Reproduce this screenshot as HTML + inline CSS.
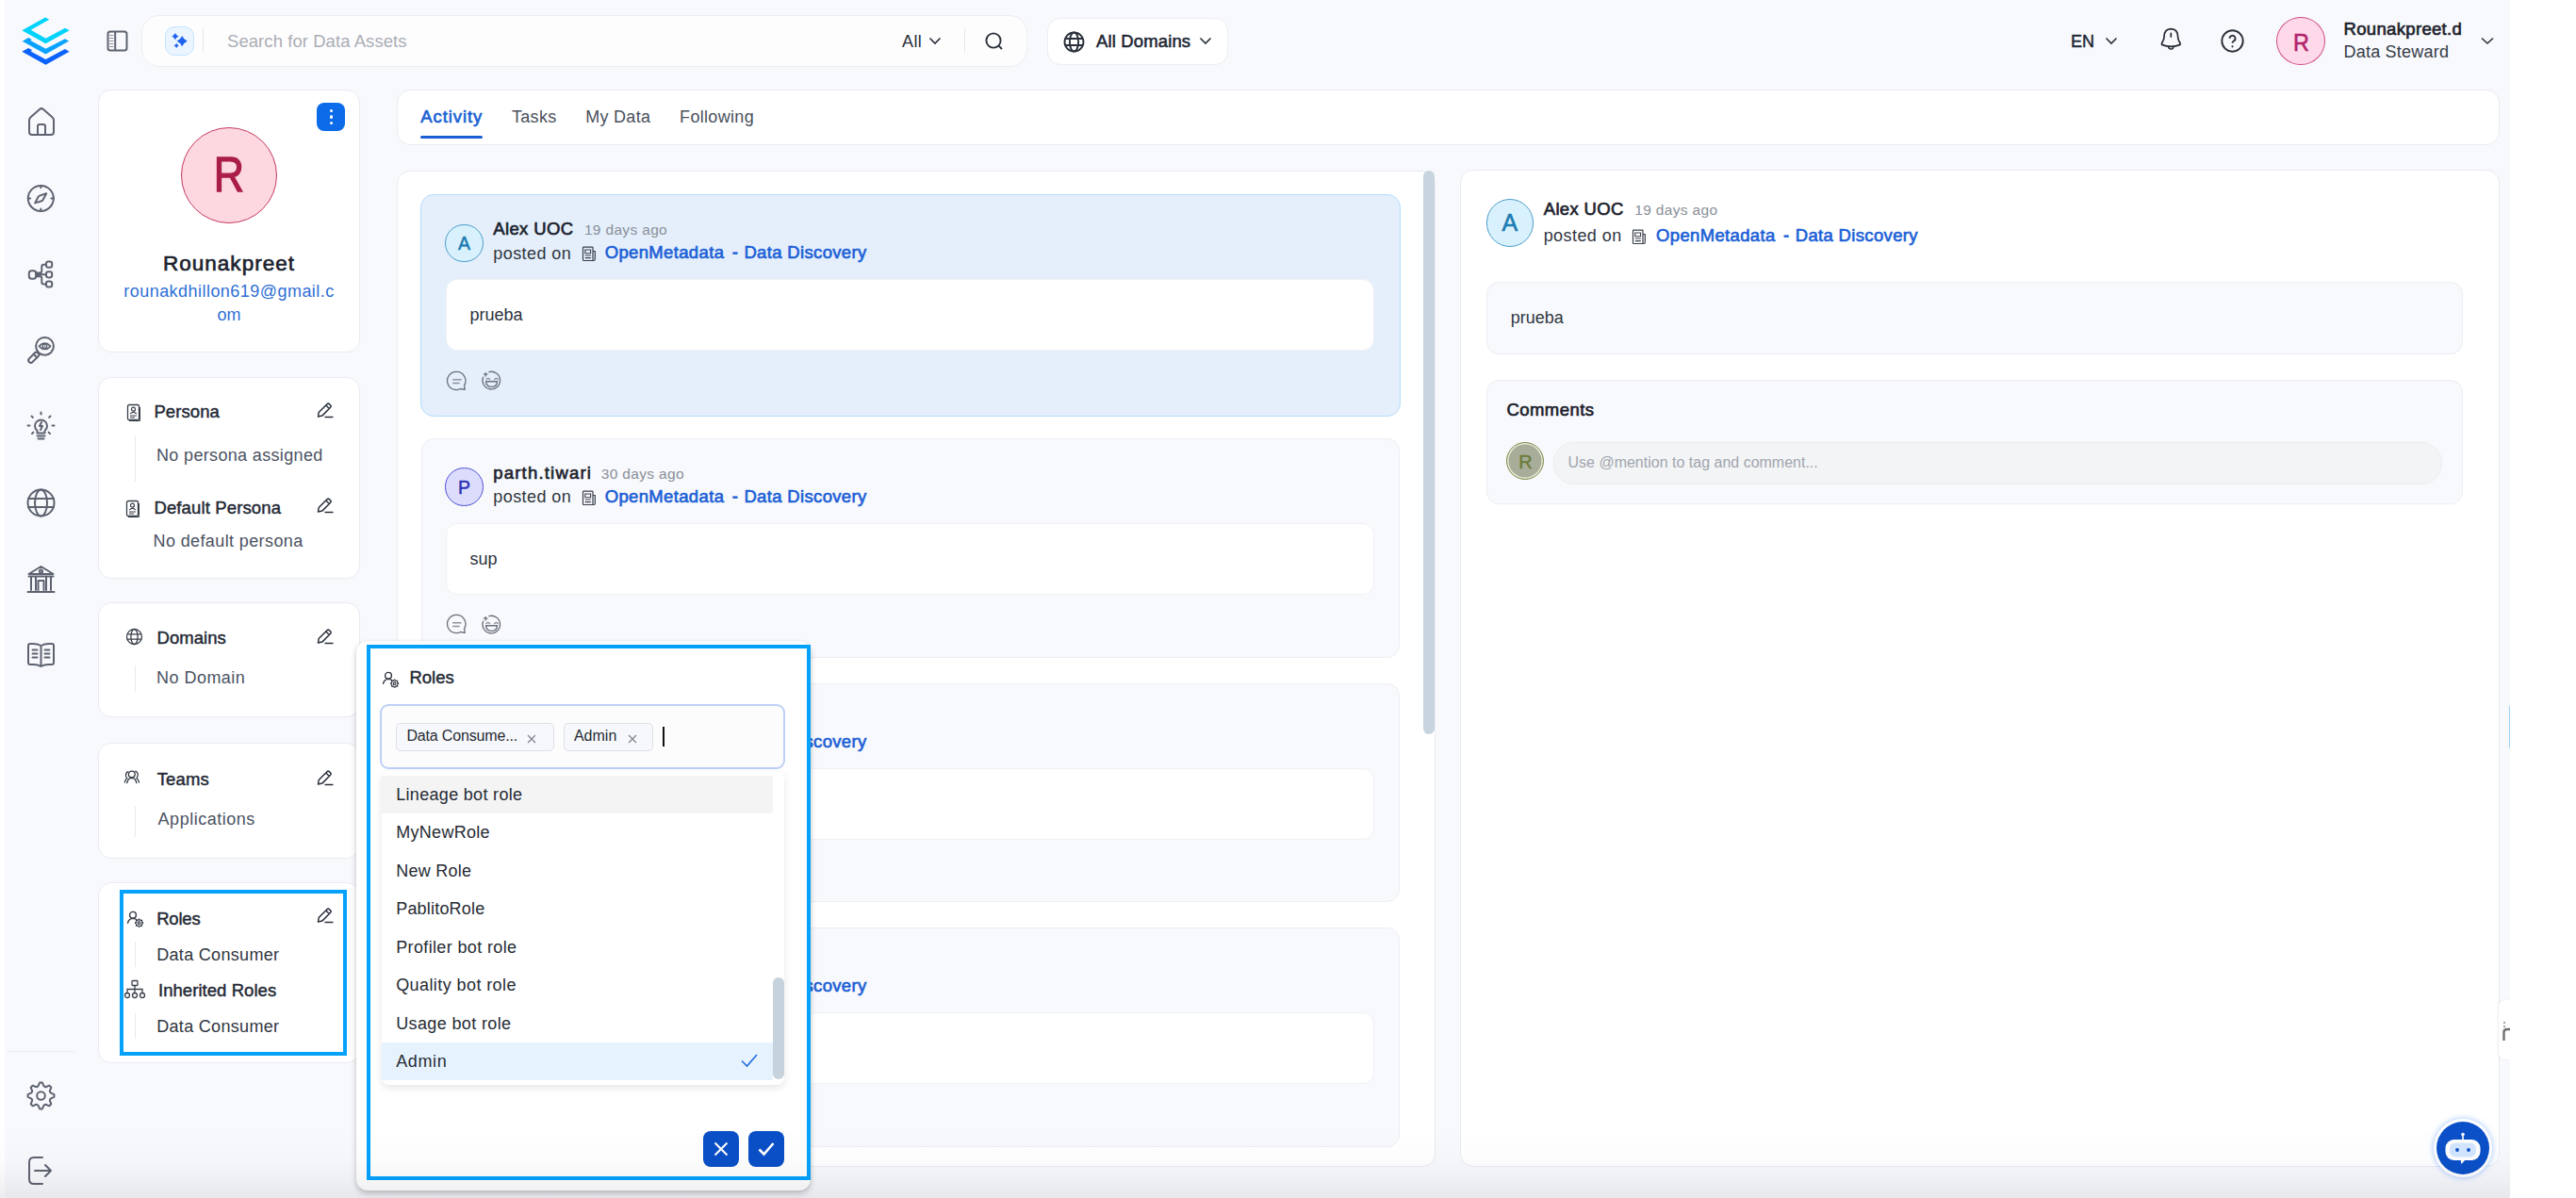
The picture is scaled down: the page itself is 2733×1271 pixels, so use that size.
<!DOCTYPE html>
<html><head><meta charset="utf-8"><title>OpenMetadata</title>
<style>
html,body{margin:0;padding:0}
body{width:2733px;height:1271px;position:relative;overflow:hidden;background:#fff;font-family:"Liberation Sans", sans-serif;}
.t{position:absolute;line-height:0;white-space:nowrap}
svg{overflow:visible}
</style></head><body>
<div style="position:absolute;left:5px;top:0px;width:2658px;height:1271px;box-sizing:border-box;background:#f8f9fc"></div>
<svg style="position:absolute;left:10px;top:10px;" width="220" height="70" viewBox="0 0 2576 820" fill="none"><polygon fill="#00d3fb" points="155,262 445,100 495,125 265,255 450,360 690,232 745,262 450,425"/><polygon fill="#0aa2ff" points="160,395 235,350 275,373 262,388 450,490 690,365 740,392 450,555"/><polygon fill="#0a62ff" points="155,525 235,480 280,505 265,520 450,620 690,493 745,525 450,688"/></svg>
<svg style="position:absolute;left:113px;top:32px;" width="23" height="23" viewBox="0 0 23 23" fill="none"><rect x="1.5" y="1.5" width="20" height="20" rx="2.5" stroke="#5d6370" stroke-width="2"/><line x1="9.2" y1="1.5" x2="9.2" y2="21.5" stroke="#5d6370" stroke-width="2"/><line x1="3.2" y1="5.5" x2="7.4" y2="5.5" stroke="#8a8f99" stroke-width="1"/><line x1="3.2" y1="8.5" x2="7.4" y2="8.5" stroke="#8a8f99" stroke-width="1"/><line x1="3.2" y1="11.5" x2="7.4" y2="11.5" stroke="#8a8f99" stroke-width="1"/><line x1="3.2" y1="14.5" x2="7.4" y2="14.5" stroke="#8a8f99" stroke-width="1"/><line x1="3.2" y1="17.5" x2="7.4" y2="17.5" stroke="#8a8f99" stroke-width="1"/></svg>
<div style="position:absolute;left:150px;top:16px;width:940px;height:55px;box-sizing:border-box;background:#fdfdfe;border:1px solid #eceef3;border-radius:19px"></div>
<div style="position:absolute;left:175px;top:28px;width:31px;height:31px;box-sizing:border-box;background:#ebf5ff;border:1px solid #c3e4ff;border-radius:10px"></div>
<svg style="position:absolute;left:175px;top:28px;" width="31" height="31" viewBox="0 0 31 31" fill="none"><path fill="#1e63f0" d="M18.2 10.1 Q19.768 14.132 23.799999999999997 15.7 Q19.768 17.268 18.2 21.299999999999997 Q16.631999999999998 17.268 12.6 15.7 Q16.631999999999998 14.132 18.2 10.1Z"/><path fill="#1e63f0" d="M10.9 7.0 Q11.908000000000001 9.591999999999999 14.5 10.6 Q11.908000000000001 11.608 10.9 14.2 Q9.892 11.608 7.300000000000001 10.6 Q9.892 9.591999999999999 10.9 7.0Z"/><path fill="#1e63f0" d="M12.2 17.799999999999997 Q12.927999999999999 19.671999999999997 14.799999999999999 20.4 Q12.927999999999999 21.128 12.2 23.0 Q11.472 21.128 9.6 20.4 Q11.472 19.671999999999997 12.2 17.799999999999997Z"/></svg>
<div style="position:absolute;left:215px;top:30px;width:1px;height:26px;box-sizing:border-box;background:#e4e6ea"></div>
<div class="t" style="left:241.00px;top:44.02px;font-size:18.5px;font-weight:400;color:#abaeb4;letter-spacing:0.063px;">Search for Data Assets</div>
<div class="t" style="left:957.00px;top:43.70px;font-size:18px;font-weight:400;color:#2a303b;letter-spacing:0.395px;">All</div>
<svg style="position:absolute;left:984px;top:37px;" width="16" height="12" viewBox="0 0 16 12" fill="none"><path d="M2.5 3.5 L8 9 L13.5 3.5" stroke="#2a303b" stroke-width="1.6" fill="none"/></svg>
<div style="position:absolute;left:1023px;top:30px;width:1px;height:26px;box-sizing:border-box;background:#e4e6ea"></div>
<svg style="position:absolute;left:1044px;top:33px;" width="22" height="22" viewBox="0 0 22 22" fill="none"><circle cx="10" cy="10" r="7.6" stroke="#2a303b" stroke-width="1.9"/><path d="M15.6 15.6 L19 19" stroke="#2a303b" stroke-width="1.9"/></svg>
<div style="position:absolute;left:1111px;top:19px;width:192px;height:50px;box-sizing:border-box;background:#fff;border:1px solid #eceef3;border-radius:14px"></div>
<svg style="position:absolute;left:1127px;top:32px;" width="25" height="25" viewBox="0 0 25 25" fill="none"><circle cx="12.5" cy="12.5" r="10" stroke="#2a303b" stroke-width="1.9"/><ellipse cx="12.5" cy="12.5" rx="4.6" ry="10" stroke="#2a303b" stroke-width="1.9"/><path d="M3 9 H22 M3 16 H22" stroke="#2a303b" stroke-width="1.9"/></svg>
<div class="t" style="left:1163.00px;top:44.02px;font-size:18.5px;font-weight:400;color:#202633;letter-spacing:0.136px;-webkit-text-stroke:0.55px #202633">All Domains</div>
<svg style="position:absolute;left:1271px;top:37px;" width="16" height="12" viewBox="0 0 16 12" fill="none"><path d="M2.5 3.5 L8 9 L13.5 3.5" stroke="#2a303b" stroke-width="1.6" fill="none"/></svg>
<div class="t" style="left:2197.00px;top:44.20px;font-size:18px;font-weight:400;color:#202633;-webkit-text-stroke:0.45px #202633">EN</div>
<svg style="position:absolute;left:2232px;top:37px;" width="16" height="12" viewBox="0 0 16 12" fill="none"><path d="M2.5 3.5 L8 9 L13.5 3.5" stroke="#2a303b" stroke-width="1.6" fill="none"/></svg>
<svg style="position:absolute;left:2290px;top:28px;" width="27" height="27" viewBox="0 0 27 27" fill="none"><path d="M3.6 19.4 Q3.1 18.3 4.1 16.8 Q6 14 6 11 Q6 2.9 13.3 2.6 Q20.6 2.9 20.6 11 Q20.6 14 22.5 16.8 Q23.5 18.3 23 19.4 Q18.3 21.3 13.3 21.3 Q8.3 21.3 3.6 19.4 Z" stroke="#222833" stroke-width="1.7" stroke-linejoin="round"/><path d="M10.6 22 Q11.3 24.3 13.3 24.3 Q15.3 24.3 16 22" stroke="#222833" stroke-width="1.6"/><path d="M13.3 7.4 V11" stroke="#222833" stroke-width="1.7" stroke-linecap="round"/></svg>
<svg style="position:absolute;left:2355px;top:30px;" width="27" height="27" viewBox="0 0 27 27" fill="none"><circle cx="13.5" cy="13.5" r="11.2" stroke="#2a303b" stroke-width="1.9"/><path d="M10.5 10.8 a3 3 0 1 1 4.3 2.7 c-1 .5 -1.3 1 -1.3 2.2" stroke="#2a303b" stroke-width="1.9" fill="none"/><circle cx="13.5" cy="19.3" r="1.1" fill="#2a303b"/></svg>
<div style="position:absolute;left:2415px;top:18px;width:52px;height:51px;box-sizing:border-box;background:#fdd9ea;border:1.3px solid #cf4b86;border-radius:50%"></div>
<div class="t" style="left:2431.61px;top:45.40px;font-size:26px;font-weight:400;color:#b1246b;-webkit-text-stroke:0.6px #b1246b;transform:scaleX(0.9)">R</div>
<div class="t" style="left:2486.50px;top:30.52px;font-size:18.5px;font-weight:400;color:#1c222d;letter-spacing:0.333px;-webkit-text-stroke:0.65px currentColor">Rounakpreet.d</div>
<div class="t" style="left:2486.50px;top:54.70px;font-size:18px;font-weight:400;color:#363c48;letter-spacing:0.220px;">Data Steward</div>
<svg style="position:absolute;left:2630px;top:37px;" width="18" height="12" viewBox="0 0 18 12" fill="none"><path d="M3 3.5 L9 9 L15 3.5" stroke="#2a303b" stroke-width="1.6" fill="none"/></svg>
<svg style="position:absolute;left:28px;top:112px;" width="32" height="34" viewBox="0 0 32 34" fill="none"><path d="M3 15.5 Q3 13.5 4.6 12.2 L14 4 Q16 2.3 18 4 L27.4 12.2 Q29 13.5 29 15.5 V28 Q29 31 26 31 H6 Q3 31 3 28 Z" stroke="#5d6370" stroke-width="2" stroke-linecap="round" stroke-linejoin="round" fill="none"/><path d="M12 31 V22 Q12 20 14 20 H18 Q20 20 20 22 V31" stroke="#5d6370" stroke-width="2" stroke-linecap="round" stroke-linejoin="round" fill="none"/></svg>
<svg style="position:absolute;left:27px;top:194px;" width="33" height="33" viewBox="0 0 33 33" fill="none"><circle cx="16.3" cy="16.4" r="13.5" stroke="#5d6370" stroke-width="2" stroke-linecap="round" stroke-linejoin="round" fill="none" stroke-width="1.9"/><path d="M16.3 3 V5.3 M16.3 27.5 V29.8 M2.8 16.4 H5.1 M27.5 16.4 H29.8" stroke="#5d6370" stroke-width="2" stroke-linecap="round" stroke-linejoin="round" fill="none" stroke-width="1.9"/><path d="M10.2 21.4 L13.6 14.8 Q14.1 13.9 15 13.6 L22.2 11.3 L18.6 18 Q18.1 18.9 17.2 19.2 Z" stroke="#5d6370" stroke-width="2" stroke-linecap="round" stroke-linejoin="round" fill="none" stroke-width="1.8"/></svg>
<svg style="position:absolute;left:28px;top:275px;" width="30" height="32" viewBox="0 0 30 32" fill="none"><rect x="2.8" y="12.3" width="7.4" height="8.4" rx="2.6" stroke="#5d6370" stroke-width="2" stroke-linecap="round" stroke-linejoin="round" fill="none" stroke-width="1.8"/><rect x="21" y="2.6" width="6.2" height="6.2" rx="2.3" stroke="#5d6370" stroke-width="2" stroke-linecap="round" stroke-linejoin="round" fill="none" stroke-width="1.8"/><rect x="21" y="13.2" width="6.2" height="6.2" rx="2.3" stroke="#5d6370" stroke-width="2" stroke-linecap="round" stroke-linejoin="round" fill="none" stroke-width="1.8"/><rect x="21" y="23.4" width="6.2" height="6.2" rx="2.3" stroke="#5d6370" stroke-width="2" stroke-linecap="round" stroke-linejoin="round" fill="none" stroke-width="1.8"/><path d="M10.2 14.4 H14.3 Q16.3 14.4 16.3 12.4 V7.7 Q16.3 5.7 18.3 5.7 H21 M10.2 16.3 H21 M10.2 18.3 H14.3 Q16.3 18.3 16.3 20.3 V24.5 Q16.3 26.5 18.3 26.5 H21" stroke="#5d6370" stroke-width="2" stroke-linecap="round" stroke-linejoin="round" fill="none" stroke-width="1.6"/></svg>
<svg style="position:absolute;left:27px;top:356px;" width="33" height="33" viewBox="0 0 33 33" fill="none"><circle cx="20.5" cy="11.3" r="9.4" stroke="#5d6370" stroke-width="2" stroke-linecap="round" stroke-linejoin="round" fill="none" stroke-width="1.9"/><g transform="rotate(45 8.7 23.3)"><rect x="6.15" y="16.6" width="5.1" height="13.4" rx="2.5" stroke="#5d6370" stroke-width="2" stroke-linecap="round" stroke-linejoin="round" fill="none" stroke-width="1.8"/><path d="M6.15 20.8 H11.25" stroke="#5d6370" stroke-width="2" stroke-linecap="round" stroke-linejoin="round" fill="none" stroke-width="1.6"/></g><path d="M14.4 11.3 Q20.5 4.9 26.6 11.3 Q20.5 17.7 14.4 11.3Z" stroke="#5d6370" stroke-width="1.7" fill="none" stroke-linejoin="round"/><circle cx="20.5" cy="11.3" r="2.2" stroke="#5d6370" stroke-width="1.4" fill="none"/><circle cx="20.5" cy="11.3" r="0.7" fill="#5d6370"/></svg>
<svg style="position:absolute;left:27px;top:435px;" width="33" height="35" viewBox="0 0 33 35" fill="none"><path d="M10 17 a6.5 6.5 0 1 1 13 0 q0 3 -2.5 5 v2.5 h-8 v-2.5 q-2.5 -2 -2.5 -5z" stroke="#5d6370" stroke-width="2" stroke-linecap="round" stroke-linejoin="round" fill="none" stroke-width="1.8"/><path d="M12.5 27.5 h8 M13.5 30.5 h6" stroke="#5d6370" stroke-width="2" stroke-linecap="round" stroke-linejoin="round" fill="none" stroke-width="1.8"/><path d="M17 13 l-2 4 h3 l-2 4" stroke="#5d6370" stroke-width="2" stroke-linecap="round" stroke-linejoin="round" fill="none" stroke-width="1.5"/><path d="M16.5 2.5 v2 M6.5 6.5 l1.4 1.4 M26.5 6.5 l-1.4 1.4 M2.5 16.5 h2 M28.5 16.5 h2 M7 25 l1.4 -1.4 M26 25 l-1.4 -1.4" stroke="#5d6370" stroke-width="2" stroke-linecap="round" stroke-linejoin="round" fill="none" stroke-width="1.8"/></svg>
<svg style="position:absolute;left:27px;top:517px;" width="33" height="33" viewBox="0 0 33 33" fill="none"><circle cx="16.5" cy="16.5" r="14" stroke="#5d6370" stroke-width="2" stroke-linecap="round" stroke-linejoin="round" fill="none"/><ellipse cx="16.5" cy="16.5" rx="6.5" ry="14" stroke="#5d6370" stroke-width="2" stroke-linecap="round" stroke-linejoin="round" fill="none"/><path d="M3 12 H30 M3 21 H30" stroke="#5d6370" stroke-width="2" stroke-linecap="round" stroke-linejoin="round" fill="none"/></svg>
<svg style="position:absolute;left:27px;top:598px;" width="33" height="33" viewBox="0 0 33 33" fill="none"><path d="M3.5 11 L16.5 3 L29.5 11 Z" stroke="#5d6370" stroke-width="2" stroke-linecap="round" stroke-linejoin="round" fill="none"/><circle cx="16.5" cy="8" r="1.6" stroke="#5d6370" stroke-width="2" stroke-linecap="round" stroke-linejoin="round" fill="none" stroke-width="1.5"/><path d="M6 14 V28 M11 14 V28 M22 14 V28 M27 14 V28 M13.5 28 V18 H19.5 V28 M2.5 30 H30.5 M3.5 13.5 H29.5" stroke="#5d6370" stroke-width="2" stroke-linecap="round" stroke-linejoin="round" fill="none"/></svg>
<svg style="position:absolute;left:27px;top:680px;" width="33" height="29" viewBox="0 0 33 29" fill="none"><path d="M16.5 5 Q13 3 8 3 H5 Q3 3 3 5 V23 Q3 25 5 25 H9 Q13 25 16.5 27 Q20 25 24 25 H28 Q30 25 30 23 V5 Q30 3 28 3 H25 Q20 3 16.5 5 Z M16.5 5 V27" stroke="#5d6370" stroke-width="2" stroke-linecap="round" stroke-linejoin="round" fill="none"/><path d="M7.5 9.5 H12.5 M7.5 13.5 H12.5 M7.5 17.5 H12.5 M20.5 9.5 H25.5 M20.5 13.5 H25.5 M20.5 17.5 H25.5" stroke="#5d6370" stroke-width="2" stroke-linecap="round" stroke-linejoin="round" fill="none" stroke-width="1.6"/></svg>
<div style="position:absolute;left:8px;top:1115px;width:71px;height:1px;box-sizing:border-box;background:#e9ebef"></div>
<svg style="position:absolute;left:28px;top:1147px;" width="31" height="31" viewBox="0 0 31 31" fill="none"><path d="M14.13 1.57 L16.87 1.57 L18.55 5.45 L20.45 6.24 L24.38 4.68 L26.32 6.62 L24.76 10.55 L25.55 12.45 L29.43 14.13 L29.43 16.87 L25.55 18.55 L24.76 20.45 L26.32 24.38 L24.38 26.32 L20.45 24.76 L18.55 25.55 L16.87 29.43 L14.13 29.43 L12.45 25.55 L10.55 24.76 L6.62 26.32 L4.68 24.38 L6.24 20.45 L5.45 18.55 L1.57 16.87 L1.57 14.13 L5.45 12.45 L6.24 10.55 L4.68 6.62 L6.62 4.68 L10.55 6.24 L12.45 5.45 Z" stroke="#5d6370" stroke-width="2" stroke-linecap="round" stroke-linejoin="round" fill="none" stroke-width="1.9"/><circle cx="15.5" cy="15.5" r="4.3" stroke="#5d6370" stroke-width="2" stroke-linecap="round" stroke-linejoin="round" fill="none" stroke-width="1.9"/></svg>
<svg style="position:absolute;left:28px;top:1225px;" width="30" height="34" viewBox="0 0 30 34" fill="none"><path d="M17 3 H8 Q3 3 3 8 V26 Q3 31 8 31 H17" stroke="#5d6370" stroke-width="2" stroke-linecap="round" stroke-linejoin="round" fill="none"/><path d="M9 17 H26 M20 11 L26 17 L20 23" stroke="#5d6370" stroke-width="2" stroke-linecap="round" stroke-linejoin="round" fill="none"/></svg>
<div style="position:absolute;left:104.3px;top:95px;width:277.7px;height:279px;box-sizing:border-box;background:#fff;border:1px solid #e9ebf2;border-radius:14px"></div>
<div style="position:absolute;left:336px;top:109px;width:30px;height:30px;box-sizing:border-box;background:#0b6be8;border-radius:8px"></div>
<div style="position:absolute;left:349.5px;top:115.9px;width:3.1999999999999886px;height:3.1999999999999886px;box-sizing:border-box;background:#fff;border-radius:50%"></div>
<div style="position:absolute;left:349.5px;top:122.4px;width:3.1999999999999886px;height:3.1999999999999886px;box-sizing:border-box;background:#fff;border-radius:50%"></div>
<div style="position:absolute;left:349.5px;top:128.9px;width:3.1999999999999886px;height:3.1999999999999886px;box-sizing:border-box;background:#fff;border-radius:50%"></div>
<div style="position:absolute;left:192px;top:135px;width:102px;height:102px;box-sizing:border-box;background:#fdd8e0;border:1.3px solid #c53b62;border-radius:50%"></div>
<div class="t" style="left:224.22px;top:185.30px;font-size:52px;font-weight:400;color:#a91d48;-webkit-text-stroke:1.3px #a91d48;transform:scaleX(0.86)">R</div>
<div class="t" style="left:173.05px;top:280.12px;font-size:22.5px;font-weight:400;color:#1c222d;letter-spacing:1.005px;-webkit-text-stroke:0.65px currentColor">Rounakpreet</div>
<div class="t" style="left:131.30px;top:308.80px;font-size:18px;font-weight:400;color:#2f6fd5;letter-spacing:0.458px;">rounakdhillon619@gmail.c</div>
<div class="t" style="left:230.49px;top:334.20px;font-size:18px;font-weight:400;color:#2f6fd5;">om</div>
<div style="position:absolute;left:104.3px;top:400px;width:277.7px;height:214px;box-sizing:border-box;background:#fff;border:1px solid #e9ebf2;border-radius:14px"></div>
<svg style="position:absolute;left:134px;top:428px;" width="16" height="20" viewBox="0 0 16 20" fill="none"><rect x="1.5" y="1.5" width="12" height="16" rx="1.5" stroke="#3a404b" stroke-width="1.3"/><path d="M3 18.5 H14.5 V4" stroke="#3a404b" stroke-width="1"/><circle cx="7.5" cy="6.2" r="2" stroke="#3a404b" stroke-width="1.2"/><path d="M4.2 11 Q7.5 7.8 10.8 11" stroke="#3a404b" stroke-width="1.2"/><path d="M4 13 H11 M4 15 H9" stroke="#3a404b" stroke-width="1.2"/></svg>
<div class="t" style="left:163.40px;top:437.02px;font-size:18.5px;font-weight:400;color:#232934;letter-spacing:0.085px;-webkit-text-stroke:0.45px currentColor">Persona</div>
<svg style="position:absolute;left:335px;top:426px;" width="20" height="19" viewBox="0 0 20 19" fill="none"><path d="M2.5 16 L3.2 11.5 L12 2.7 Q13.2 1.5 14.4 2.7 L15.6 3.9 Q16.8 5.1 15.6 6.3 L6.8 15.1 Z M10.8 4 L14.3 7.5" stroke="#2a303b" stroke-width="1.5" stroke-linejoin="round" fill="none"/><path d="M9.5 16.5 H18.5" stroke="#2a303b" stroke-width="1.5"/></svg>
<div style="position:absolute;left:143px;top:462px;width:1px;height:49px;box-sizing:border-box;background:#e8eaee"></div>
<div class="t" style="left:166.00px;top:482.70px;font-size:18px;font-weight:400;color:#4b5262;letter-spacing:0.341px;">No persona assigned</div>
<svg style="position:absolute;left:133px;top:530px;" width="16" height="20" viewBox="0 0 16 20" fill="none"><rect x="1.5" y="1.5" width="12" height="16" rx="1.5" stroke="#3a404b" stroke-width="1.3"/><path d="M3 18.5 H14.5 V4" stroke="#3a404b" stroke-width="1"/><circle cx="7.5" cy="6.2" r="2" stroke="#3a404b" stroke-width="1.2"/><path d="M4.2 11 Q7.5 7.8 10.8 11" stroke="#3a404b" stroke-width="1.2"/><path d="M4 13 H11 M4 15 H9" stroke="#3a404b" stroke-width="1.2"/></svg>
<div class="t" style="left:163.40px;top:538.52px;font-size:18.5px;font-weight:400;color:#232934;letter-spacing:0.135px;-webkit-text-stroke:0.45px currentColor">Default Persona</div>
<svg style="position:absolute;left:335px;top:527px;" width="20" height="19" viewBox="0 0 20 19" fill="none"><path d="M2.5 16 L3.2 11.5 L12 2.7 Q13.2 1.5 14.4 2.7 L15.6 3.9 Q16.8 5.1 15.6 6.3 L6.8 15.1 Z M10.8 4 L14.3 7.5" stroke="#2a303b" stroke-width="1.5" stroke-linejoin="round" fill="none"/><path d="M9.5 16.5 H18.5" stroke="#2a303b" stroke-width="1.5"/></svg>
<div class="t" style="left:162.50px;top:573.70px;font-size:18px;font-weight:400;color:#4b5262;letter-spacing:0.388px;">No default persona</div>
<div style="position:absolute;left:104.3px;top:639px;width:277.7px;height:122px;box-sizing:border-box;background:#fff;border:1px solid #e9ebf2;border-radius:14px"></div>
<svg style="position:absolute;left:133px;top:666px;" width="19" height="19" viewBox="0 0 19 19" fill="none"><circle cx="9.5" cy="9.5" r="8" stroke="#3a404b" stroke-width="1.3"/><ellipse cx="9.5" cy="9.5" rx="3.6" ry="8" stroke="#3a404b" stroke-width="1.3"/><path d="M1.8 6.8 H17.2 M1.8 12.2 H17.2" stroke="#3a404b" stroke-width="1.3"/></svg>
<div class="t" style="left:166.60px;top:676.52px;font-size:18.5px;font-weight:400;color:#232934;letter-spacing:0.029px;-webkit-text-stroke:0.45px currentColor">Domains</div>
<svg style="position:absolute;left:335px;top:666px;" width="20" height="19" viewBox="0 0 20 19" fill="none"><path d="M2.5 16 L3.2 11.5 L12 2.7 Q13.2 1.5 14.4 2.7 L15.6 3.9 Q16.8 5.1 15.6 6.3 L6.8 15.1 Z M10.8 4 L14.3 7.5" stroke="#2a303b" stroke-width="1.5" stroke-linejoin="round" fill="none"/><path d="M9.5 16.5 H18.5" stroke="#2a303b" stroke-width="1.5"/></svg>
<div style="position:absolute;left:143px;top:706px;width:1px;height:28px;box-sizing:border-box;background:#e8eaee"></div>
<div class="t" style="left:166.10px;top:718.70px;font-size:18px;font-weight:400;color:#4b5262;letter-spacing:0.461px;">No Domain</div>
<div style="position:absolute;left:104.3px;top:788px;width:277.7px;height:123px;box-sizing:border-box;background:#fff;border:1px solid #e9ebf2;border-radius:14px"></div>
<svg style="position:absolute;left:131px;top:816px;" width="18" height="16" viewBox="0 0 18 16" fill="none"><circle cx="8.8" cy="5.5" r="3.4" stroke="#2f3540" stroke-width="1.3"/><path d="M3.8 14.6 Q4.6 9.4 8.8 9.3 Q13 9.4 13.8 14.6" stroke="#2f3540" stroke-width="1.3" stroke-linecap="round"/><path d="M5 2.6 Q2.4 3.6 2.5 6.6 Q2.6 8.6 3.8 9.6 Q1.9 10.9 1.3 14.2" stroke="#2f3540" stroke-width="1.2" stroke-linecap="round"/><path d="M12.6 2 Q15.4 3.2 15.3 6.3 Q15.2 8.4 13.9 9.5 Q15.9 10.8 16.6 14.2" stroke="#2f3540" stroke-width="1.2" stroke-linecap="round"/></svg>
<div class="t" style="left:166.70px;top:826.52px;font-size:18.5px;font-weight:400;color:#232934;letter-spacing:0.160px;-webkit-text-stroke:0.45px currentColor">Teams</div>
<svg style="position:absolute;left:335px;top:816px;" width="20" height="19" viewBox="0 0 20 19" fill="none"><path d="M2.5 16 L3.2 11.5 L12 2.7 Q13.2 1.5 14.4 2.7 L15.6 3.9 Q16.8 5.1 15.6 6.3 L6.8 15.1 Z M10.8 4 L14.3 7.5" stroke="#2a303b" stroke-width="1.5" stroke-linejoin="round" fill="none"/><path d="M9.5 16.5 H18.5" stroke="#2a303b" stroke-width="1.5"/></svg>
<div style="position:absolute;left:143px;top:855px;width:1px;height:33px;box-sizing:border-box;background:#e8eaee"></div>
<div class="t" style="left:167.60px;top:868.70px;font-size:18px;font-weight:400;color:#4b5262;letter-spacing:0.511px;">Applications</div>
<div style="position:absolute;left:104.3px;top:936px;width:277.7px;height:192px;box-sizing:border-box;background:#fff;border:1px solid #e9ebf2;border-radius:14px"></div>
<svg style="position:absolute;left:132px;top:963px;" width="22" height="22" viewBox="0 0 22 22" fill="none"><circle cx="9" cy="7.8" r="3.4" stroke="#2f3540" stroke-width="1.4"/><path d="M3.6 16.2 Q4.6 11.6 9 11.4 Q11.6 11.4 12.8 12.8" stroke="#2f3540" stroke-width="1.4" stroke-linecap="round"/><path d="M15.20 12.12 L16.00 12.12 L16.50 13.23 L17.06 13.47 L18.20 13.03 L18.77 13.60 L18.33 14.74 L18.57 15.30 L19.68 15.80 L19.68 16.60 L18.57 17.10 L18.33 17.66 L18.77 18.80 L18.20 19.37 L17.06 18.93 L16.50 19.17 L16.00 20.28 L15.20 20.28 L14.70 19.17 L14.14 18.93 L13.00 19.37 L12.43 18.80 L12.87 17.66 L12.63 17.10 L11.52 16.60 L11.52 15.80 L12.63 15.30 L12.87 14.74 L12.43 13.60 L13.00 13.03 L14.14 13.47 L14.70 13.23 Z" stroke="#2f3540" stroke-width="1.1" stroke-linejoin="round" fill="#fff"/><circle cx="15.6" cy="16.2" r="1.3" stroke="#2f3540" stroke-width="1.1"/></svg>
<div class="t" style="left:166.20px;top:974.52px;font-size:18.5px;font-weight:400;color:#232934;letter-spacing:-0.202px;-webkit-text-stroke:0.45px currentColor">Roles</div>
<svg style="position:absolute;left:335px;top:962px;" width="20" height="19" viewBox="0 0 20 19" fill="none"><path d="M2.5 16 L3.2 11.5 L12 2.7 Q13.2 1.5 14.4 2.7 L15.6 3.9 Q16.8 5.1 15.6 6.3 L6.8 15.1 Z M10.8 4 L14.3 7.5" stroke="#2a303b" stroke-width="1.5" stroke-linejoin="round" fill="none"/><path d="M9.5 16.5 H18.5" stroke="#2a303b" stroke-width="1.5"/></svg>
<div style="position:absolute;left:143px;top:999px;width:1px;height:27px;box-sizing:border-box;background:#e8eaee"></div>
<div class="t" style="left:166.20px;top:1012.70px;font-size:18px;font-weight:400;color:#2f3541;letter-spacing:0.318px;">Data Consumer</div>
<svg style="position:absolute;left:131px;top:1039px;" width="24" height="22" viewBox="0 0 24 22" fill="none"><rect x="9" y="1.5" width="6" height="5" rx="0.8" stroke="#3a404b" stroke-width="1.3"/><path d="M12 6.5 V10.5 M4 14.5 V10.5 H20 V14.5 M12 10.5 V14.5" stroke="#3a404b" stroke-width="1.3"/><circle cx="4" cy="17" r="2.5" stroke="#3a404b" stroke-width="1.3"/><circle cx="12" cy="17" r="2.5" stroke="#3a404b" stroke-width="1.3"/><circle cx="20" cy="17" r="2.5" stroke="#3a404b" stroke-width="1.3"/></svg>
<div class="t" style="left:168.00px;top:1050.53px;font-size:18.5px;font-weight:400;color:#232934;letter-spacing:0.051px;-webkit-text-stroke:0.45px currentColor">Inherited Roles</div>
<div style="position:absolute;left:143px;top:1075px;width:1px;height:27px;box-sizing:border-box;background:#e8eaee"></div>
<div class="t" style="left:166.20px;top:1088.70px;font-size:18px;font-weight:400;color:#2f3541;letter-spacing:0.318px;">Data Consumer</div>
<div style="position:absolute;left:127px;top:943.5px;width:241px;height:176.5px;box-sizing:border-box;border:4px solid #05a2fc"></div>
<div style="position:absolute;left:421px;top:95px;width:2231px;height:59px;box-sizing:border-box;background:#fff;border:1px solid #e9ebf2;border-radius:14px"></div>
<div class="t" style="left:446.30px;top:123.83px;font-size:18.5px;font-weight:400;color:#1b5fd4;letter-spacing:0.913px;-webkit-text-stroke:0.65px currentColor">Activity</div>
<div style="position:absolute;left:446px;top:143.5px;width:66px;height:3.3000000000000114px;box-sizing:border-box;background:#1b5fd4;border-radius:2px"></div>
<div class="t" style="left:542.90px;top:124.00px;font-size:18px;font-weight:400;color:#4a505c;letter-spacing:0.357px;">Tasks</div>
<div class="t" style="left:621.30px;top:124.00px;font-size:18px;font-weight:400;color:#4a505c;letter-spacing:0.267px;">My Data</div>
<div class="t" style="left:721.10px;top:124.00px;font-size:18px;font-weight:400;color:#4a505c;letter-spacing:0.317px;">Following</div>
<div style="position:absolute;left:421px;top:180.5px;width:1102px;height:1057.5px;box-sizing:border-box;background:#fff;border:1px solid #e9ebf2;border-radius:14px"></div>
<div style="position:absolute;left:1509.7px;top:180.5px;width:12.799999999999955px;height:598.5px;box-sizing:border-box;background:#c8d5de;border-radius:7px"></div>
<div style="position:absolute;left:446px;top:206.0px;width:1040px;height:235.5px;box-sizing:border-box;background:#e4effb;border:1.6px solid #b3dcfc;border-radius:14px"></div>
<div style="position:absolute;left:472.2px;top:237.7px;width:40.599999999999966px;height:40.60000000000002px;box-sizing:border-box;background:#d9f1fc;border:1.2px solid #4c9dcb;border-radius:50%"></div>
<div class="t" style="left:485.99px;top:257.98px;font-size:19.5px;font-weight:400;color:#1b7bb3;-webkit-text-stroke:0.5px #1b7bb3">A</div>
<div class="t" style="left:523.30px;top:243.33px;font-size:18.5px;font-weight:400;color:#1c222d;letter-spacing:0.356px;-webkit-text-stroke:0.65px currentColor">Alex UOC</div>
<div class="t" style="left:619.90px;top:244.38px;font-size:15.5px;font-weight:400;color:#8a8f98;letter-spacing:0.339px;">19 days ago</div>
<div class="t" style="left:523.30px;top:268.70px;font-size:18px;font-weight:400;color:#30363f;letter-spacing:0.425px;">posted on</div>
<svg style="position:absolute;left:617px;top:261.0px;" width="16" height="17" viewBox="0 0 16 17" fill="none"><path d="M1.5 2 Q1.5 1.2 2.3 1.2 H11.2 Q12 1.2 12 2 V15.5 H2.3 Q1.5 15.5 1.5 14.7 Z" stroke="#3a404b" stroke-width="1.2"/><path d="M12 5.5 H14.3 V14.3 Q14.3 15.5 13.1 15.5 H12" stroke="#3a404b" stroke-width="1.2"/><path d="M3.8 4 H9.6 V7.8 H3.8 Z" stroke="#3a404b" stroke-width="1.1"/><path d="M3.8 10 H9.8 M3.8 12.6 H9.8" stroke="#3a404b" stroke-width="1.1"/></svg>
<div class="t" style="left:641.70px;top:268.02px;font-size:18.5px;font-weight:400;color:#1c5fd6;letter-spacing:0.349px;-webkit-text-stroke:0.65px currentColor">OpenMetadata</div>
<div class="t" style="left:776.80px;top:268.02px;font-size:18.5px;font-weight:400;color:#1c5fd6;-webkit-text-stroke:0.65px currentColor">-</div>
<div class="t" style="left:789.40px;top:268.02px;font-size:18.5px;font-weight:400;color:#1c5fd6;letter-spacing:0.340px;-webkit-text-stroke:0.65px currentColor">Data Discovery</div>
<div style="position:absolute;left:472.7px;top:296.0px;width:985.8px;height:76.0px;box-sizing:border-box;background:#fff;border:1px solid #f0f1f4;border-radius:12px"></div>
<div class="t" style="left:498.50px;top:334.40px;font-size:18px;font-weight:400;color:#2b313b;">prueba</div>
<svg style="position:absolute;left:473px;top:392.5px;" width="22" height="22" viewBox="0 0 22 22" fill="none"><path d="M11 1.4 A9.6 9.6 0 1 0 15.6 19.5 L20.2 20.4 L19.6 15.9 A9.6 9.6 0 0 0 11 1.4Z" stroke="#6a707b" stroke-width="1.3" stroke-linejoin="round"/><path d="M7.2 9.8 H16.6 M7.2 13.5 H14.6" stroke="#8f949e" stroke-width="1.5"/></svg>
<svg style="position:absolute;left:510px;top:392.0px;" width="23" height="23" viewBox="0 0 23 23" fill="none"><path d="M8.8 2.6 A9.3 9.3 0 1 1 2.6 8.2" stroke="#6a707b" stroke-width="1.3" stroke-linecap="round"/><path d="M5.6 12.7 H17.5 Q17.2 18.4 11.55 18.4 Q5.9 18.4 5.6 12.7Z" stroke="#6a707b" stroke-width="1.4" stroke-linejoin="round"/><path d="M5.9 10.6 Q7.8 8.4 9.7 10.6 M14.6 10.6 Q16.5 8.4 18.4 10.6" stroke="#8f949e" stroke-width="1.4" stroke-linecap="round"/><path d="M5.25 2.9 V7.5 M2.95 5.2 H7.55" stroke="#6a707b" stroke-width="1.3"/></svg>
<div style="position:absolute;left:446.5px;top:465.2px;width:1038.5px;height:233.3px;box-sizing:border-box;background:#f8f9fc;border:1px solid #eceef3;border-radius:13px"></div>
<div style="position:absolute;left:472.2px;top:496.40000000000003px;width:40.599999999999966px;height:40.599999999999966px;box-sizing:border-box;background:#dcdcfd;border:1.2px solid #4d50d8;border-radius:50%"></div>
<div class="t" style="left:485.99px;top:516.67px;font-size:19.5px;font-weight:400;color:#2e32b3;-webkit-text-stroke:0.5px #2e32b3">P</div>
<div class="t" style="left:523.30px;top:502.02px;font-size:18.5px;font-weight:400;color:#1c222d;letter-spacing:1.193px;-webkit-text-stroke:0.65px currentColor">parth.tiwari</div>
<div class="t" style="left:637.80px;top:503.07px;font-size:15.5px;font-weight:400;color:#8a8f98;letter-spacing:0.339px;">30 days ago</div>
<div class="t" style="left:523.30px;top:527.40px;font-size:18px;font-weight:400;color:#30363f;letter-spacing:0.425px;">posted on</div>
<svg style="position:absolute;left:617px;top:519.7px;" width="16" height="17" viewBox="0 0 16 17" fill="none"><path d="M1.5 2 Q1.5 1.2 2.3 1.2 H11.2 Q12 1.2 12 2 V15.5 H2.3 Q1.5 15.5 1.5 14.7 Z" stroke="#3a404b" stroke-width="1.2"/><path d="M12 5.5 H14.3 V14.3 Q14.3 15.5 13.1 15.5 H12" stroke="#3a404b" stroke-width="1.2"/><path d="M3.8 4 H9.6 V7.8 H3.8 Z" stroke="#3a404b" stroke-width="1.1"/><path d="M3.8 10 H9.8 M3.8 12.6 H9.8" stroke="#3a404b" stroke-width="1.1"/></svg>
<div class="t" style="left:641.70px;top:526.73px;font-size:18.5px;font-weight:400;color:#1c5fd6;letter-spacing:0.349px;-webkit-text-stroke:0.65px currentColor">OpenMetadata</div>
<div class="t" style="left:776.80px;top:526.73px;font-size:18.5px;font-weight:400;color:#1c5fd6;-webkit-text-stroke:0.65px currentColor">-</div>
<div class="t" style="left:789.40px;top:526.73px;font-size:18.5px;font-weight:400;color:#1c5fd6;letter-spacing:0.340px;-webkit-text-stroke:0.65px currentColor">Data Discovery</div>
<div style="position:absolute;left:472.7px;top:554.7px;width:985.8px;height:76.0px;box-sizing:border-box;background:#fff;border:1px solid #f0f1f4;border-radius:12px"></div>
<div class="t" style="left:498.50px;top:593.10px;font-size:18px;font-weight:400;color:#2b313b;">sup</div>
<svg style="position:absolute;left:473px;top:651.2px;" width="22" height="22" viewBox="0 0 22 22" fill="none"><path d="M11 1.4 A9.6 9.6 0 1 0 15.6 19.5 L20.2 20.4 L19.6 15.9 A9.6 9.6 0 0 0 11 1.4Z" stroke="#6a707b" stroke-width="1.3" stroke-linejoin="round"/><path d="M7.2 9.8 H16.6 M7.2 13.5 H14.6" stroke="#8f949e" stroke-width="1.5"/></svg>
<svg style="position:absolute;left:510px;top:650.7px;" width="23" height="23" viewBox="0 0 23 23" fill="none"><path d="M8.8 2.6 A9.3 9.3 0 1 1 2.6 8.2" stroke="#6a707b" stroke-width="1.3" stroke-linecap="round"/><path d="M5.6 12.7 H17.5 Q17.2 18.4 11.55 18.4 Q5.9 18.4 5.6 12.7Z" stroke="#6a707b" stroke-width="1.4" stroke-linejoin="round"/><path d="M5.9 10.6 Q7.8 8.4 9.7 10.6 M14.6 10.6 Q16.5 8.4 18.4 10.6" stroke="#8f949e" stroke-width="1.4" stroke-linecap="round"/><path d="M5.25 2.9 V7.5 M2.95 5.2 H7.55" stroke="#6a707b" stroke-width="1.3"/></svg>
<div style="position:absolute;left:446.5px;top:725.4px;width:1038.5px;height:232.10000000000002px;box-sizing:border-box;background:#f8f9fc;border:1px solid #eceef3;border-radius:13px"></div>
<div style="position:absolute;left:472.2px;top:756.6px;width:40.599999999999966px;height:40.59999999999991px;box-sizing:border-box;background:#d9f1fc;border:1.2px solid #4c9dcb;border-radius:50%"></div>
<div class="t" style="left:485.99px;top:776.87px;font-size:19.5px;font-weight:400;color:#1b7bb3;-webkit-text-stroke:0.5px #1b7bb3">A</div>
<div class="t" style="left:523.30px;top:762.22px;font-size:18.5px;font-weight:400;color:#1c222d;letter-spacing:0.356px;-webkit-text-stroke:0.65px currentColor">Alex UOC</div>
<div class="t" style="left:619.90px;top:763.27px;font-size:15.5px;font-weight:400;color:#8a8f98;letter-spacing:0.339px;">19 days ago</div>
<div class="t" style="left:523.30px;top:787.60px;font-size:18px;font-weight:400;color:#30363f;letter-spacing:0.425px;">posted on</div>
<svg style="position:absolute;left:617px;top:779.9px;" width="16" height="17" viewBox="0 0 16 17" fill="none"><path d="M1.5 2 Q1.5 1.2 2.3 1.2 H11.2 Q12 1.2 12 2 V15.5 H2.3 Q1.5 15.5 1.5 14.7 Z" stroke="#3a404b" stroke-width="1.2"/><path d="M12 5.5 H14.3 V14.3 Q14.3 15.5 13.1 15.5 H12" stroke="#3a404b" stroke-width="1.2"/><path d="M3.8 4 H9.6 V7.8 H3.8 Z" stroke="#3a404b" stroke-width="1.1"/><path d="M3.8 10 H9.8 M3.8 12.6 H9.8" stroke="#3a404b" stroke-width="1.1"/></svg>
<div class="t" style="left:641.70px;top:786.92px;font-size:18.5px;font-weight:400;color:#1c5fd6;letter-spacing:0.349px;-webkit-text-stroke:0.65px currentColor">OpenMetadata</div>
<div class="t" style="left:776.80px;top:786.92px;font-size:18.5px;font-weight:400;color:#1c5fd6;-webkit-text-stroke:0.65px currentColor">-</div>
<div class="t" style="left:789.40px;top:786.92px;font-size:18.5px;font-weight:400;color:#1c5fd6;letter-spacing:0.340px;-webkit-text-stroke:0.65px currentColor">Data Discovery</div>
<div style="position:absolute;left:472.7px;top:814.9px;width:985.8px;height:76.0px;box-sizing:border-box;background:#fff;border:1px solid #f0f1f4;border-radius:12px"></div>
<div class="t" style="left:498.50px;top:853.30px;font-size:18px;font-weight:400;color:#2b313b;">prueba</div>
<svg style="position:absolute;left:473px;top:911.4px;" width="22" height="22" viewBox="0 0 22 22" fill="none"><path d="M11 1.4 A9.6 9.6 0 1 0 15.6 19.5 L20.2 20.4 L19.6 15.9 A9.6 9.6 0 0 0 11 1.4Z" stroke="#6a707b" stroke-width="1.3" stroke-linejoin="round"/><path d="M7.2 9.8 H16.6 M7.2 13.5 H14.6" stroke="#8f949e" stroke-width="1.5"/></svg>
<svg style="position:absolute;left:510px;top:910.9px;" width="23" height="23" viewBox="0 0 23 23" fill="none"><path d="M8.8 2.6 A9.3 9.3 0 1 1 2.6 8.2" stroke="#6a707b" stroke-width="1.3" stroke-linecap="round"/><path d="M5.6 12.7 H17.5 Q17.2 18.4 11.55 18.4 Q5.9 18.4 5.6 12.7Z" stroke="#6a707b" stroke-width="1.4" stroke-linejoin="round"/><path d="M5.9 10.6 Q7.8 8.4 9.7 10.6 M14.6 10.6 Q16.5 8.4 18.4 10.6" stroke="#8f949e" stroke-width="1.4" stroke-linecap="round"/><path d="M5.25 2.9 V7.5 M2.95 5.2 H7.55" stroke="#6a707b" stroke-width="1.3"/></svg>
<div style="position:absolute;left:446.5px;top:984.4px;width:1038.5px;height:232.60000000000002px;box-sizing:border-box;background:#f8f9fc;border:1px solid #eceef3;border-radius:13px"></div>
<div style="position:absolute;left:472.2px;top:1015.6000000000001px;width:40.599999999999966px;height:40.59999999999991px;box-sizing:border-box;background:#d9f1fc;border:1.2px solid #4c9dcb;border-radius:50%"></div>
<div class="t" style="left:485.99px;top:1035.88px;font-size:19.5px;font-weight:400;color:#1b7bb3;-webkit-text-stroke:0.5px #1b7bb3">A</div>
<div class="t" style="left:523.30px;top:1021.23px;font-size:18.5px;font-weight:400;color:#1c222d;letter-spacing:0.356px;-webkit-text-stroke:0.65px currentColor">Alex UOC</div>
<div class="t" style="left:619.90px;top:1022.28px;font-size:15.5px;font-weight:400;color:#8a8f98;letter-spacing:0.339px;">19 days ago</div>
<div class="t" style="left:523.30px;top:1046.60px;font-size:18px;font-weight:400;color:#30363f;letter-spacing:0.425px;">posted on</div>
<svg style="position:absolute;left:617px;top:1038.9px;" width="16" height="17" viewBox="0 0 16 17" fill="none"><path d="M1.5 2 Q1.5 1.2 2.3 1.2 H11.2 Q12 1.2 12 2 V15.5 H2.3 Q1.5 15.5 1.5 14.7 Z" stroke="#3a404b" stroke-width="1.2"/><path d="M12 5.5 H14.3 V14.3 Q14.3 15.5 13.1 15.5 H12" stroke="#3a404b" stroke-width="1.2"/><path d="M3.8 4 H9.6 V7.8 H3.8 Z" stroke="#3a404b" stroke-width="1.1"/><path d="M3.8 10 H9.8 M3.8 12.6 H9.8" stroke="#3a404b" stroke-width="1.1"/></svg>
<div class="t" style="left:641.70px;top:1045.93px;font-size:18.5px;font-weight:400;color:#1c5fd6;letter-spacing:0.349px;-webkit-text-stroke:0.65px currentColor">OpenMetadata</div>
<div class="t" style="left:776.80px;top:1045.93px;font-size:18.5px;font-weight:400;color:#1c5fd6;-webkit-text-stroke:0.65px currentColor">-</div>
<div class="t" style="left:789.40px;top:1045.93px;font-size:18.5px;font-weight:400;color:#1c5fd6;letter-spacing:0.340px;-webkit-text-stroke:0.65px currentColor">Data Discovery</div>
<div style="position:absolute;left:472.7px;top:1073.9px;width:985.8px;height:76.0px;box-sizing:border-box;background:#fff;border:1px solid #f0f1f4;border-radius:12px"></div>
<div class="t" style="left:498.50px;top:1112.30px;font-size:18px;font-weight:400;color:#2b313b;">prueba</div>
<svg style="position:absolute;left:473px;top:1170.4px;" width="22" height="22" viewBox="0 0 22 22" fill="none"><path d="M11 1.4 A9.6 9.6 0 1 0 15.6 19.5 L20.2 20.4 L19.6 15.9 A9.6 9.6 0 0 0 11 1.4Z" stroke="#6a707b" stroke-width="1.3" stroke-linejoin="round"/><path d="M7.2 9.8 H16.6 M7.2 13.5 H14.6" stroke="#8f949e" stroke-width="1.5"/></svg>
<svg style="position:absolute;left:510px;top:1169.9px;" width="23" height="23" viewBox="0 0 23 23" fill="none"><path d="M8.8 2.6 A9.3 9.3 0 1 1 2.6 8.2" stroke="#6a707b" stroke-width="1.3" stroke-linecap="round"/><path d="M5.6 12.7 H17.5 Q17.2 18.4 11.55 18.4 Q5.9 18.4 5.6 12.7Z" stroke="#6a707b" stroke-width="1.4" stroke-linejoin="round"/><path d="M5.9 10.6 Q7.8 8.4 9.7 10.6 M14.6 10.6 Q16.5 8.4 18.4 10.6" stroke="#8f949e" stroke-width="1.4" stroke-linecap="round"/><path d="M5.25 2.9 V7.5 M2.95 5.2 H7.55" stroke="#6a707b" stroke-width="1.3"/></svg>
<div style="position:absolute;left:1549px;top:180.3px;width:1103px;height:1057.7px;box-sizing:border-box;background:#fff;border:1px solid #e9ebf2;border-radius:14px"></div>
<div style="position:absolute;left:1576.5px;top:211px;width:50.5px;height:50.5px;box-sizing:border-box;background:#d9f1fc;border:1.3px solid #4c9dcb;border-radius:50%"></div>
<div class="t" style="left:1593.46px;top:236.25px;font-size:25px;font-weight:400;color:#1b7bb3;-webkit-text-stroke:0.6px #1b7bb3">A</div>
<div class="t" style="left:1637.70px;top:221.93px;font-size:18.5px;font-weight:400;color:#1c222d;letter-spacing:0.356px;-webkit-text-stroke:0.65px currentColor">Alex UOC</div>
<div class="t" style="left:1734.30px;top:222.97px;font-size:15.5px;font-weight:400;color:#8a8f98;letter-spacing:0.339px;">19 days ago</div>
<div class="t" style="left:1637.70px;top:250.20px;font-size:18px;font-weight:400;color:#30363f;letter-spacing:0.425px;">posted on</div>
<svg style="position:absolute;left:1731px;top:242.5px;" width="16" height="17" viewBox="0 0 16 17" fill="none"><path d="M1.5 2 Q1.5 1.2 2.3 1.2 H11.2 Q12 1.2 12 2 V15.5 H2.3 Q1.5 15.5 1.5 14.7 Z" stroke="#3a404b" stroke-width="1.2"/><path d="M12 5.5 H14.3 V14.3 Q14.3 15.5 13.1 15.5 H12" stroke="#3a404b" stroke-width="1.2"/><path d="M3.8 4 H9.6 V7.8 H3.8 Z" stroke="#3a404b" stroke-width="1.1"/><path d="M3.8 10 H9.8 M3.8 12.6 H9.8" stroke="#3a404b" stroke-width="1.1"/></svg>
<div class="t" style="left:1757.00px;top:249.53px;font-size:18.5px;font-weight:400;color:#1c5fd6;letter-spacing:0.349px;-webkit-text-stroke:0.65px currentColor">OpenMetadata</div>
<div class="t" style="left:1892.10px;top:249.53px;font-size:18.5px;font-weight:400;color:#1c5fd6;-webkit-text-stroke:0.65px currentColor">-</div>
<div class="t" style="left:1904.70px;top:249.53px;font-size:18.5px;font-weight:400;color:#1c5fd6;letter-spacing:0.340px;-webkit-text-stroke:0.65px currentColor">Data Discovery</div>
<div style="position:absolute;left:1576.7px;top:299.3px;width:1036.3px;height:77.19999999999999px;box-sizing:border-box;background:#f8f9fc;border:1px solid #eceef3;border-radius:13px"></div>
<div class="t" style="left:1602.70px;top:337.30px;font-size:18px;font-weight:400;color:#30363f;">prueba</div>
<div style="position:absolute;left:1576.7px;top:402.7px;width:1036.3px;height:132.3px;box-sizing:border-box;background:#f8f9fc;border:1px solid #eceef3;border-radius:13px"></div>
<div class="t" style="left:1598.40px;top:435.02px;font-size:18.5px;font-weight:400;color:#1c222d;letter-spacing:0.456px;-webkit-text-stroke:0.65px currentColor">Comments</div>
<div style="position:absolute;left:1597.5px;top:468.5px;width:40.5px;height:40.5px;box-sizing:border-box;background:#a7ad98;border:1.5px solid #87924f;border-radius:50%;box-shadow:inset 0 0 0 1.5px #e8ead8"></div>
<div class="t" style="left:1611.27px;top:489.50px;font-size:20px;font-weight:400;color:#6b7c3a;-webkit-text-stroke:0.4px #6b7c3a">R</div>
<div style="position:absolute;left:1647.7px;top:469px;width:943.3px;height:45.299999999999955px;box-sizing:border-box;background:#f3f4f6;border:1px solid #ebecef;border-radius:22px"></div>
<div class="t" style="left:1663.50px;top:491.40px;font-size:16px;font-weight:400;color:#a0a5ad;">Use @mention to tag and comment...</div>
<div style="position:absolute;left:2651px;top:1061px;width:12px;height:63px;box-sizing:border-box;background:#fff;border-radius:6px 0 0 6px;box-shadow:-1px 0 2px rgba(0,0,0,.08)"></div>
<svg style="position:absolute;left:2654px;top:1082px;" width="9" height="24" viewBox="0 0 9 24" fill="none"><path d="M3 2 V4 M3 6 V8" stroke="#8a8a8a" stroke-width="1.6"/><path d="M2.5 22 V13 Q2.5 10 6 10 H9" stroke="#6f6f6f" stroke-width="2.4" fill="none"/></svg>
<div style="position:absolute;left:2663px;top:0px;width:70px;height:1271px;box-sizing:border-box;background:#fff"></div>
<div style="position:absolute;left:2661.5px;top:749px;width:1.199999999999818px;height:45px;box-sizing:border-box;background:#9fd3f7"></div>
<div style="position:absolute;left:2582px;top:1187px;width:62px;height:62px;box-sizing:border-box;background:#fff;border-radius:50%;box-shadow:0 0 6px rgba(40,120,255,.45)"></div>
<div style="position:absolute;left:2585px;top:1190px;width:56px;height:56px;box-sizing:border-box;background:#0b50c8;border-radius:50%"></div>
<svg style="position:absolute;left:2591px;top:1198px;" width="44" height="44" viewBox="0 0 44 44" fill="none"><circle cx="22" cy="5.5" r="1.8" fill="#fff"/><path d="M22 6 V11" stroke="#fff" stroke-width="1.6"/><rect x="3.5" y="11" width="37" height="22" rx="9" fill="#fff"/><rect x="8" y="14.5" width="28" height="15" rx="6" fill="#d3e6ff"/><circle cx="16" cy="22" r="1.9" fill="#0b50c8"/><circle cx="28" cy="22" r="1.9" fill="#0b50c8"/><path d="M19.5 32.5 L24.5 32.5 L20.5 37 Z" fill="#fff"/></svg>
<div style="position:absolute;left:377.5px;top:680px;width:482.0px;height:583px;box-sizing:border-box;background:#fff;border-radius:12px;box-shadow:0 3px 6px rgba(0,0,0,.22),0 0 2px rgba(0,0,0,.08)"></div>
<div style="position:absolute;left:389px;top:684px;width:471px;height:568px;box-sizing:border-box;border:4px solid #05a2fc"></div>
<svg style="position:absolute;left:403.3px;top:708.6px;" width="22" height="22" viewBox="0 0 22 22" fill="none"><circle cx="9" cy="7.8" r="3.4" stroke="#2f3540" stroke-width="1.4"/><path d="M3.6 16.2 Q4.6 11.6 9 11.4 Q11.6 11.4 12.8 12.8" stroke="#2f3540" stroke-width="1.4" stroke-linecap="round"/><path d="M15.20 12.12 L16.00 12.12 L16.50 13.23 L17.06 13.47 L18.20 13.03 L18.77 13.60 L18.33 14.74 L18.57 15.30 L19.68 15.80 L19.68 16.60 L18.57 17.10 L18.33 17.66 L18.77 18.80 L18.20 19.37 L17.06 18.93 L16.50 19.17 L16.00 20.28 L15.20 20.28 L14.70 19.17 L14.14 18.93 L13.00 19.37 L12.43 18.80 L12.87 17.66 L12.63 17.10 L11.52 16.60 L11.52 15.80 L12.63 15.30 L12.87 14.74 L12.43 13.60 L13.00 13.03 L14.14 13.47 L14.70 13.23 Z" stroke="#2f3540" stroke-width="1.1" stroke-linejoin="round" fill="#fff"/><circle cx="15.6" cy="16.2" r="1.3" stroke="#2f3540" stroke-width="1.1"/></svg>
<div class="t" style="left:434.50px;top:718.73px;font-size:18.5px;font-weight:400;color:#232934;letter-spacing:-0.022px;-webkit-text-stroke:0.45px currentColor">Roles</div>
<div style="position:absolute;left:403px;top:747px;width:430px;height:68.5px;box-sizing:border-box;background:#fcfcfd;border:2px solid #bdd0f6;border-radius:9px"></div>
<div style="position:absolute;left:420px;top:767px;width:167.5px;height:30px;box-sizing:border-box;background:#f7f8fb;border:1px solid #dde0e6;border-radius:5px"></div>
<div class="t" style="left:431.40px;top:781.20px;font-size:16px;font-weight:400;color:#262b33;letter-spacing:-0.157px;">Data Consume...</div>
<svg style="position:absolute;left:557px;top:776.5px;" width="14" height="14" viewBox="0 0 14 14" fill="none"><path d="M3 3 L11 11 M11 3 L3 11" stroke="#7d828b" stroke-width="1.15"/></svg>
<div style="position:absolute;left:597.5px;top:767px;width:95.5px;height:30px;box-sizing:border-box;background:#f7f8fb;border:1px solid #dde0e6;border-radius:5px"></div>
<div class="t" style="left:608.90px;top:781.20px;font-size:16px;font-weight:400;color:#262b33;letter-spacing:0.028px;">Admin</div>
<svg style="position:absolute;left:663.5px;top:776.5px;" width="14" height="14" viewBox="0 0 14 14" fill="none"><path d="M3 3 L11 11 M11 3 L3 11" stroke="#7d828b" stroke-width="1.15"/></svg>
<div style="position:absolute;left:703.3px;top:770.7px;width:2.0px;height:21.59999999999991px;box-sizing:border-box;background:#111"></div>
<div style="position:absolute;left:404.5px;top:817.5px;width:427.5px;height:333.0px;box-sizing:border-box;background:#fff;border-radius:8px;box-shadow:0 3px 8px rgba(0,0,0,.10)"></div>
<div style="position:absolute;left:404.5px;top:823px;width:415.5px;height:40px;box-sizing:border-box;background:#f4f4f5"></div>
<div style="position:absolute;left:404.5px;top:1106px;width:415.5px;height:40px;box-sizing:border-box;background:#e6f3ff"></div>
<div class="t" style="left:420.20px;top:842.60px;font-size:18px;font-weight:400;color:#262b33;letter-spacing:0.318px;">Lineage bot role</div>
<div class="t" style="left:420.20px;top:883.10px;font-size:18px;font-weight:400;color:#262b33;letter-spacing:0.297px;">MyNewRole</div>
<div class="t" style="left:420.20px;top:923.60px;font-size:18px;font-weight:400;color:#262b33;letter-spacing:0.271px;">New Role</div>
<div class="t" style="left:420.20px;top:964.10px;font-size:18px;font-weight:400;color:#262b33;letter-spacing:0.194px;">PablitoRole</div>
<div class="t" style="left:420.20px;top:1004.60px;font-size:18px;font-weight:400;color:#262b33;letter-spacing:0.361px;">Profiler bot role</div>
<div class="t" style="left:420.20px;top:1045.10px;font-size:18px;font-weight:400;color:#262b33;letter-spacing:0.415px;">Quality bot role</div>
<div class="t" style="left:420.20px;top:1085.60px;font-size:18px;font-weight:400;color:#262b33;letter-spacing:0.366px;">Usage bot role</div>
<div class="t" style="left:420.20px;top:1126.10px;font-size:18px;font-weight:400;color:#262b33;letter-spacing:0.634px;">Admin</div>
<svg style="position:absolute;left:784px;top:1116px;" width="22" height="18" viewBox="0 0 22 18" fill="none"><path d="M3 9.5 L8.5 15 L19 3" stroke="#1f6be0" stroke-width="1.6" fill="none"/></svg>
<div style="position:absolute;left:819.5px;top:1037px;width:12.5px;height:108px;box-sizing:border-box;background:#c6d3dc;border-radius:6px"></div>
<div style="position:absolute;left:745.5px;top:1200px;width:38.0px;height:38px;box-sizing:border-box;background:#0a4fc7;border-radius:8px"></div>
<svg style="position:absolute;left:745.5px;top:1200px;" width="38" height="38" viewBox="0 0 38 38" fill="none"><path d="M12.5 12.5 L25.5 25.5 M25.5 12.5 L12.5 25.5" stroke="#fff" stroke-width="2"/></svg>
<div style="position:absolute;left:794px;top:1200px;width:38px;height:38px;box-sizing:border-box;background:#0a4fc7;border-radius:8px"></div>
<svg style="position:absolute;left:794px;top:1200px;" width="38" height="38" viewBox="0 0 38 38" fill="none"><path d="M11.5 19.5 L16.5 24.5 L26.5 13" stroke="#fff" stroke-width="2.6" fill="none"/></svg>
<div style="position:absolute;left:0px;top:1195px;width:2663px;height:76px;box-sizing:border-box;background:linear-gradient(rgba(20,25,50,0) 0%,rgba(20,25,50,0.012) 45%,rgba(20,25,50,0.035) 70%,rgba(20,25,50,0.075) 100%);pointer-events:none"></div>
</body></html>
